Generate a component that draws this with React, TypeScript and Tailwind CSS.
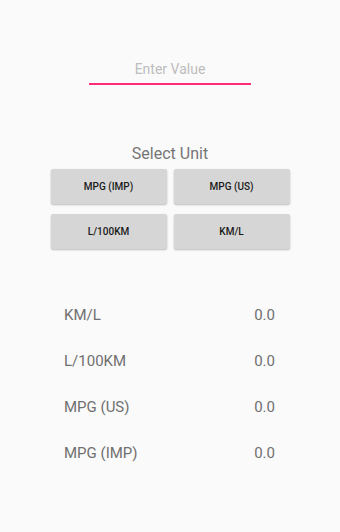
import React from 'react';

const units = ['MPG (IMP)', 'MPG (US)', 'L/100KM', 'KM/L'];

const results = [
  { label: 'KM/L', value: '0.0' },
  { label: 'L/100KM', value: '0.0' },
  { label: 'MPG (US)', value: '0.0' },
  { label: 'MPG (IMP)', value: '0.0' },
];

export default function App() {
  return (
    <div
      className="w-[340px] h-[532px] bg-[#fafafa] flex flex-col items-center"
      style={{ fontFamily: 'Roboto, "Liberation Sans", sans-serif' }}
    >
      {/* value input */}
      <div className="mt-[59px] w-[162px] flex flex-col items-center">
        <div className="text-[14px] leading-[20px] text-[#bdbdbd]">Enter Value</div>
        <div className="mt-[4px] h-[2px] w-full bg-[#ff2d78]" />
      </div>

      {/* unit selection */}
      <div className="mt-[59px] text-[16px] leading-[20px] text-[#757575]">Select Unit</div>
      <div className="mt-[5px] grid grid-cols-2 gap-x-[7px] gap-y-[10px] w-[239px]">
        {units.map((u) => (
          <button
            key={u}
            className="h-[35px] rounded-[2px] bg-[#d6d6d6] shadow-[0_1px_2px_rgba(0,0,0,0.25)] text-[10px] font-medium text-[#1a1a1a]"
          >
            {u}
          </button>
        ))}
      </div>

      {/* results */}
      <div className="mt-[56px] w-full pl-[64px] pr-[65px] flex flex-col gap-[26px]">
        {results.map((r) => (
          <div key={r.label} className="flex justify-between text-[15px] leading-[20px] text-[#707070]">
            <span>{r.label}</span>
            <span>{r.value}</span>
          </div>
        ))}
      </div>
    </div>
  );
}
